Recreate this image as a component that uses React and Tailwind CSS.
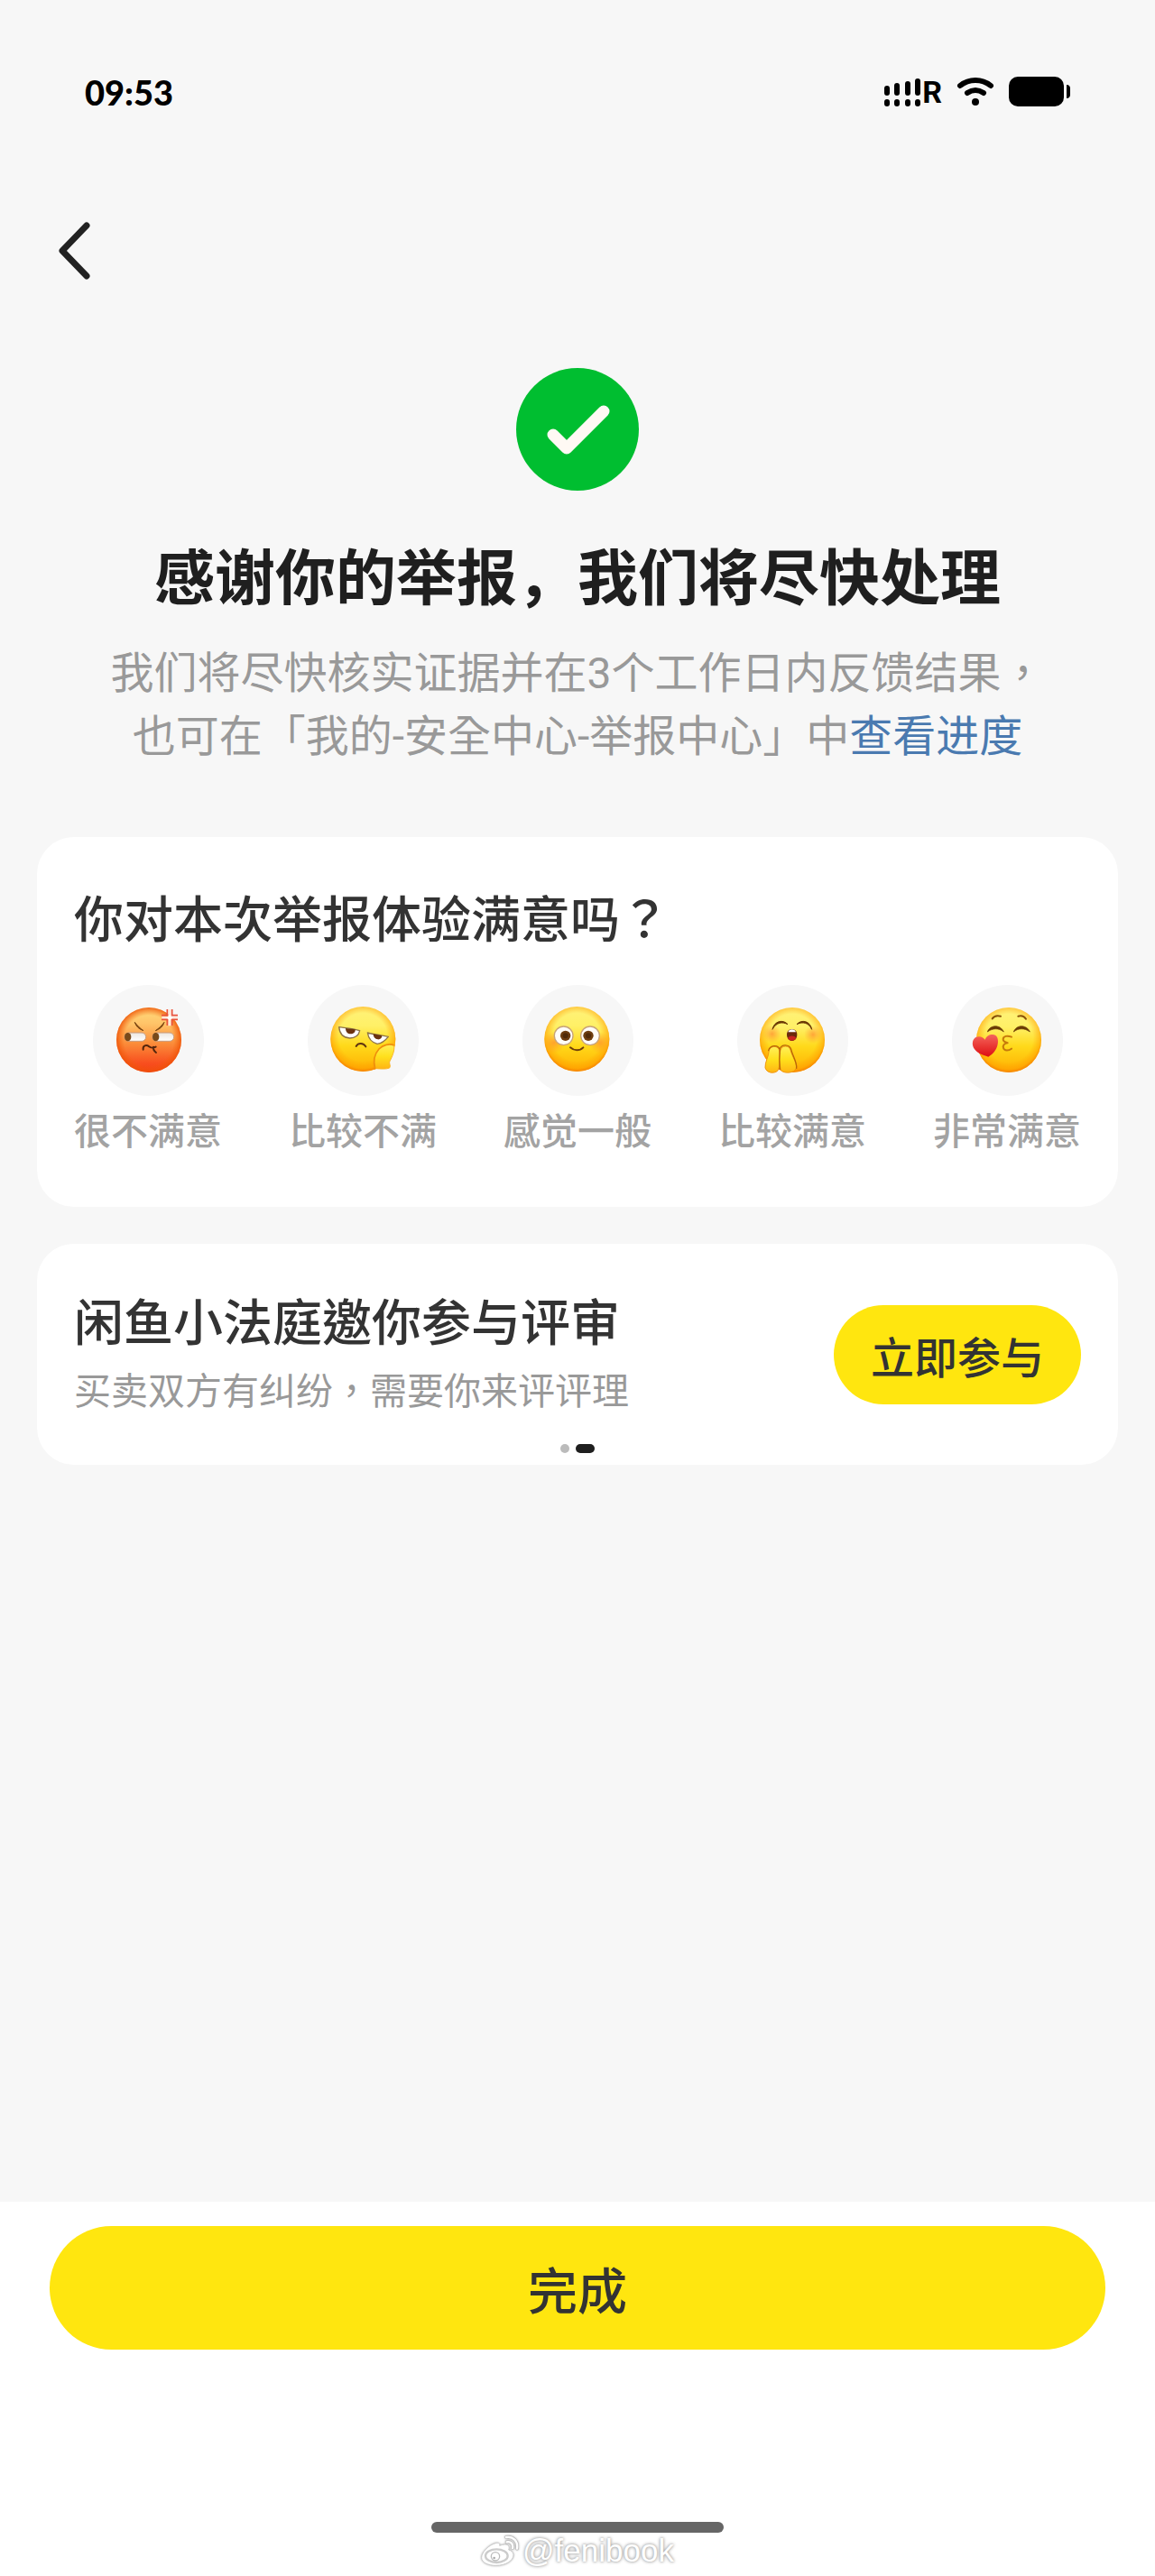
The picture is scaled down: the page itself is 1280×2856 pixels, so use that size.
import React, { useState } from "react";

const ratings = [
  { id: "angry", label: "很不满意", Face: AngryFace },
  { id: "bored", label: "比较不满", Face: BoredFace },
  { id: "neutral", label: "感觉一般", Face: NeutralFace },
  { id: "happy", label: "比较满意", Face: HappyFace },
  { id: "love", label: "非常满意", Face: LoveFace },
];

// Gradients shared by all five faces
function FaceDefs() {
  return (
    <svg className="absolute h-0 w-0" aria-hidden="true">
      <defs>
        <linearGradient id="face-yellow" x1="0" y1="0" x2="0" y2="1">
          <stop offset="0" stopColor="#fff27a" />
          <stop offset="0.3" stopColor="#fff066" />
          <stop offset="0.6" stopColor="#ffd91a" />
          <stop offset="1" stopColor="#ffae00" />
        </linearGradient>
        <radialGradient id="face-rim" cx="0.5" cy="0.47" r="0.53">
          <stop offset="0.7" stopColor="#ff9a00" stopOpacity="0" />
          <stop offset="0.9" stopColor="#ff9a00" stopOpacity="0.5" />
          <stop offset="1" stopColor="#f57c00" stopOpacity="0.95" />
        </radialGradient>
        <linearGradient id="face-red" x1="0" y1="0" x2="0" y2="1">
          <stop offset="0" stopColor="#ffdb7c" />
          <stop offset="0.25" stopColor="#ffc368" />
          <stop offset="0.55" stopColor="#fb8d3a" />
          <stop offset="0.85" stopColor="#f8501f" />
          <stop offset="1" stopColor="#f53a18" />
        </linearGradient>
        <radialGradient id="face-red-rim" cx="0.5" cy="0.5" r="0.5">
          <stop offset="0.76" stopColor="#f4600a" stopOpacity="0" />
          <stop offset="1" stopColor="#ee5208" stopOpacity="0.85" />
        </radialGradient>
        <radialGradient id="face-blush">
          <stop offset="0" stopColor="#ff7a2e" stopOpacity="0.6" />
          <stop offset="1" stopColor="#ff8a2e" stopOpacity="0" />
        </radialGradient>
        <linearGradient id="face-hand" x1="0" y1="0" x2="0" y2="1">
          <stop offset="0" stopColor="#fff05a" />
          <stop offset="0.5" stopColor="#ffe01c" />
          <stop offset="1" stopColor="#ffb413" />
        </linearGradient>
        <linearGradient id="face-heart" x1="0" y1="0" x2="0" y2="1">
          <stop offset="0" stopColor="#f4655c" />
          <stop offset="0.5" stopColor="#ea3a36" />
          <stop offset="1" stopColor="#dc0d14" />
        </linearGradient>
        <linearGradient id="face-eye" x1="0" y1="0" x2="0" y2="1">
          <stop offset="0" stopColor="#ece6e0" />
          <stop offset="1" stopColor="#ffffff" />
        </linearGradient>
      </defs>
    </svg>
  );
}

function FaceFrame({ cx, cy, fill = "url(#face-yellow)", rim = "url(#face-rim)", children }) {
  return (
    <svg viewBox="0 0 369 369" className="h-full w-full" fill="none" aria-hidden="true">
      <circle cx={cx} cy={cy} r="108" fill={fill} />
      <circle cx={cx} cy={cy} r="108" fill={rim} />
      {children}
    </svg>
  );
}

function AngryFace() {
  return (
    <FaceFrame cx={186} cy={183} fill="url(#face-red)" rim="url(#face-red-rim)">
      <path d="M139 124c8 11 17 20 29 28-13-4-25-13-29-28Z" fill="#7a4510" stroke="#7a4510" strokeWidth="3" strokeLinejoin="round" />
      <path d="M237 124c-8 11-17 20-29 28 13-4 25-13 29-28Z" fill="#7a4510" stroke="#7a4510" strokeWidth="3" strokeLinejoin="round" />
      <rect x="105" y="159" width="71" height="28" rx="14" fill="url(#face-eye)" stroke="#c99b7d" strokeWidth="3" />
      <rect x="198" y="159" width="71" height="28" rx="14" fill="url(#face-eye)" stroke="#c99b7d" strokeWidth="3" />
      <ellipse cx="116" cy="173" rx="11" ry="14" fill="#78491a" />
      <ellipse cx="209" cy="173" rx="11" ry="14" fill="#78491a" />
      <path d="M167 215c-2-14 10-17 20-10 8 5 12 6 22 1M201 206c-1 10 3 15 9 19" stroke="#54250c" strokeWidth="6" strokeLinecap="round" />
      <g stroke="#ffe9dc" strokeWidth="10">
        <path d="M255 82v54M229 109h53" />
      </g>
      <path
        d="M247 81v20h-19M263 81v20h19M247 135v-20h-19M263 135v-20h19"
        stroke="#e9523c"
        strokeWidth="5"
        strokeLinejoin="round"
      />
      <path d="m255 98 4 7 7 4-7 4-4 7-4-7-7-4 7-4Z" fill="#fff" />
    </FaceFrame>
  );
}

function BoredFace() {
  return (
    <FaceFrame cx={184} cy={180}>
      <path d="M104 140c20 3 47 5 69 12-4 19-16 25-33 25-21-1-34-15-36-37Z" fill="#fff" stroke="#8d7344" strokeWidth="4" strokeLinejoin="round" />
      <path d="M126 144l32 4c1 10-6 15-15 15-10 0-17-7-17-19Z" fill="#6b3310" />
      <path d="M199 159c20 5 47 9 69 13-10 13-20 22-37 24-18-5-29-17-32-37Z" fill="#fff" stroke="#8d7344" strokeWidth="4" strokeLinejoin="round" />
      <path d="M218 163l29 6c0 9-7 13-14 12-9-1-15-8-15-18Z" fill="#6b3310" />
      <path d="M161 204c7-12 24-12 32 1" stroke="#5f3410" strokeWidth="6" strokeLinecap="round" />
      <path
        d="M224 278c-6-22-3-47 13-65 13-13 35-20 50-12 3 20-7 38-15 55-1 8 5 13 0 20-11 5-31 3-48 2Z"
        fill="url(#face-hand)"
      />
      <path d="M224 278c-6-22-3-47 13-65 13-13 35-20 50-12" stroke="#ef8e0c" strokeWidth="5" strokeLinecap="round" />
      <path d="M287 201c3 20-7 38-15 55-1 8 5 13 0 20-11 5-31 3-45 2" stroke="#fcb526" strokeWidth="3" />
    </FaceFrame>
  );
}

function NeutralFace() {
  return (
    <FaceFrame cx={181} cy={180}>
      <circle cx="105" cy="192" r="36" fill="url(#face-blush)" />
      <circle cx="257" cy="192" r="36" fill="url(#face-blush)" />
      <circle cx="137" cy="169" r="31" fill="#fffdf9" stroke="#c8a379" strokeWidth="4" />
      <circle cx="225" cy="169" r="31" fill="#fffdf9" stroke="#c8a379" strokeWidth="4" />
      <circle cx="143" cy="169" r="17" fill="#6d3d10" />
      <circle cx="219" cy="169" r="17" fill="#6d3d10" />
      <circle cx="143" cy="169" r="9" fill="#4f2a0a" />
      <circle cx="219" cy="169" r="9" fill="#4f2a0a" />
      <path d="M159 208c13 12 31 12 43 0" stroke="#6e3e0a" strokeWidth="6" strokeLinecap="round" />
    </FaceFrame>
  );
}

function HappyFace() {
  return (
    <FaceFrame cx={183} cy={183}>
      <circle cx="116" cy="163" r="30" fill="url(#face-blush)" />
      <circle cx="252" cy="165" r="30" fill="url(#face-blush)" />
      <path d="M117 148c6-28 35-35 51-17-19-10-39-6-51 17ZM198 131c16-18 45-11 50 17-10-23-31-27-50-17Z" fill="#6a3804" stroke="#6a3804" strokeWidth="3" strokeLinejoin="round" />
      <path d="M165 165c0-24 34-24 34 0 0 28-34 28-34 0Z" fill="#6b2a0c" />
      <path d="M169 157c3-12 23-12 26 0Z" fill="#fff" />
      <path d="M168 177c5-10 23-10 28 0-5 11-23 11-28 0Z" fill="#c9251f" />
      <path
        d="M106 218c4-15 26-18 33-3 6 25 4 57-5 71-12 10-37 7-41-11-1-18 11-35 13-57Z"
        fill="url(#face-hand)"
        stroke="#f2960f"
        strokeWidth="3"
      />
      <path
        d="M144 216c5-16 28-16 33 0 6 25 23 43 19 61-6 16-36 19-50 8-7-20-8-48-2-69Z"
        fill="url(#face-hand)"
        stroke="#f2960f"
        strokeWidth="3"
      />
      <path d="M104 218c5-18 31-21 37-4 7-19 32-16 38 0 5 22 21 44 18 63M142 214c-2 24-2 45 0 66" stroke="#b8660a" strokeWidth="4" strokeLinecap="round" />
    </FaceFrame>
  );
}

function LoveFace() {
  return (
    <FaceFrame cx={189} cy={183}>
      <path d="M134 112c6-9 17-11 28-8M220 104c11-3 21 1 26 9" stroke="#8a5208" strokeWidth="6" strokeLinecap="round" />
      <path d="M118 156c8-24 43-26 54 0-16-13-36-13-54 0ZM205 156c10-26 44-24 54 0-18-13-38-13-54 0Z" fill="#6a3a04" stroke="#6a3a04" strokeWidth="2" strokeLinejoin="round" />
      <path d="M198 173c-14-6-28-3-28 8 0 8 8 10 15 12-11 1-17 8-14 17 3 10 18 9 27 2" stroke="#c67a0b" strokeWidth="6" strokeLinecap="round" strokeLinejoin="round" />
      <path
        d="M110 182c4-12 15-18 27-17 15 1 19 19 14 37-4 14-13 27-30 37-21-7-40-14-49-30-7-15-3-31 9-36 12-4 22 0 29 9Z"
        fill="url(#face-heart)"
      />
    </FaceFrame>
  );
}

function StatusBar() {
  return (
    <header className="flex h-[204px] items-center justify-between px-[94px] text-black">
      <time className="font-[Lato,sans-serif] text-[38px] leading-[40px] font-black">09:53</time>
      <div className="flex items-center">
        <svg width="42" height="32" viewBox="0 0 42 32" className="mr-px" aria-label="信号">
          <g stroke="#000" strokeWidth="6" strokeLinecap="round">
            <path d="M4 12v5M15 9v8M27 7v10M38 4v13" />
            <path d="M4 27v2M15 27v2M27 27v2M38 27v2" />
          </g>
        </svg>
        <span className="font-[Roboto,sans-serif] text-[34px] leading-[32px] font-bold">R</span>
        <svg width="42" height="34" viewBox="0 0 42 34" className="mr-4 ml-4" fill="none" aria-label="Wi-Fi">
          <path d="M4 10c10-8 24-8 34 0" stroke="#000" strokeWidth="6" strokeLinecap="round" />
          <path d="M12 18c6-4 12-4 18 0" stroke="#000" strokeWidth="6" strokeLinecap="round" />
          <circle cx="21" cy="28" r="4" fill="#000" />
        </svg>
        <svg width="68" height="34" viewBox="0 0 68 34" aria-label="电量">
          <rect x="0" y="0" width="61" height="33" rx="10" fill="#000" />
          <path d="M64 9c3 0 4 2 4 4v7c0 2-1 4-4 4Z" fill="#000" />
        </svg>
      </div>
    </header>
  );
}

function ResultHeader() {
  return (
    <section className="flex flex-col items-center pt-14 text-center">
      <svg width="137" height="137" viewBox="0 0 137 137" fill="none" aria-hidden="true">
        <circle cx="68" cy="68" r="68" fill="#00be30" />
        <path d="m41 74 15 15 41-41" stroke="#fff9f4" strokeWidth="13" strokeLinecap="round" strokeLinejoin="round" />
      </svg>
      <h1 className="mt-11 font-['Noto_Sans_CJK_SC',sans-serif] text-[67px] leading-[94px] font-bold text-[#1f1f1f]">
        感谢你的举报，我们将尽快处理
      </h1>
      <p className="mt-[29px] font-[Roboto,'Noto_Sans_CJK_TC',sans-serif] text-[48px] leading-[70px] text-[#999]">
        我们将尽快核实证据并在3个工作日内反馈结果，
        <br />
        也可在「我的-安全中心-举报中心」中
        <a href="#progress" className="text-[#4a7ab0]">
          查看进度
        </a>
      </p>
    </section>
  );
}

function RatingCard() {
  const [selected, setSelected] = useState(null);

  return (
    <section className="rounded-[41px] bg-white px-[41px] pt-[52px] pb-[59px]">
      <h2 className="text-[55px] leading-[70px] font-medium text-[#333]">你对本次举报体验满意吗？</h2>
      <div className="mt-[42px] flex justify-between">
        {ratings.map(({ id, label, Face }) => (
          <button
            key={id}
            type="button"
            aria-pressed={selected === id}
            onClick={() => setSelected(id)}
            className="flex flex-col items-center"
          >
            <span className="h-[123px] w-[123px] rounded-full bg-[#f7f7f7]">
              <Face />
            </span>
            <span className="mt-2 text-[41px] leading-[56px] font-medium text-[#a3a3a3]">{label}</span>
          </button>
        ))}
      </div>
    </section>
  );
}

function CourtCard() {
  return (
    <section className="rounded-[41px] bg-white px-[41px] pt-12 pb-[13px]">
      <div className="flex items-center justify-between">
        <div className="pb-[10px]">
          <h2 className="text-[55px] leading-[70px] font-medium text-[#333]">闲鱼小法庭邀你参与评审</h2>
          <p className="mt-[14px] text-[41px] leading-[56px] text-[#999]">买卖双方有纠纷，需要你来评评理</p>
        </div>
        <button type="button" className="h-[110px] rounded-full bg-[#ffe60f] px-[41px] text-[48px] font-medium text-[#333]">
          立即参与
        </button>
      </div>
      <div className="mt-6 flex justify-center gap-[7px]">
        <span className="h-[10px] w-[10px] rounded-full bg-[#bbb]" />
        <span className="h-[10px] w-[21px] rounded-full bg-[#1f1f1f]" />
      </div>
    </section>
  );
}

function Watermark() {
  return (
    <div className="flex items-center gap-1 text-white">
      <svg width="42" height="34" viewBox="0 0 126 102" className="drop-shadow-[0_0_1px_#aaa]" aria-hidden="true">
        <path
          d="M48 26c-22 6-46 30-46 48 0 16 22 26 48 26 34 0 58-17 58-35 0-10-8-15-16-17 4-10 0-18-12-18-6 0-12 2-18 4 2-6-2-11-14-8Z"
          fill="#fff"
          stroke="#ccc"
          strokeWidth="3"
        />
        <ellipse cx="52" cy="68" rx="37" ry="22" fill="#fff" stroke="#ccc" strokeWidth="7" />
        <circle cx="48" cy="70" r="14" fill="#fff" stroke="#bbb" strokeWidth="4" />
        <circle cx="44" cy="75" r="4" fill="#aaa" />
        <path d="M84 6c24-4 40 14 36 38M86 22c13-3 22 7 19 20" fill="none" stroke="#bbb" strokeWidth="11" strokeLinecap="round" />
        <path d="M84 6c24-4 40 14 36 38M86 22c13-3 22 7 19 20" fill="none" stroke="#fff" strokeWidth="7" strokeLinecap="round" />
      </svg>
      <span className="font-['Liberation_Sans',sans-serif] text-[35px] leading-[40px] [text-shadow:0_0_3px_#999,0_0_4px_#bbb]">
        @fenibook
      </span>
    </div>
  );
}

export default function App() {
  return (
    <div className="flex min-h-screen flex-col bg-[#f7f7f7] font-['Noto_Sans_CJK_TC',sans-serif]">
      <FaceDefs />
      <StatusBar />
      <nav className="flex h-[148px] items-center px-[64px]">
        <button type="button" aria-label="返回">
          <svg width="38" height="64" viewBox="0 0 38 64" fill="none">
            <path d="M32 4 5 32l27 28" stroke="#222" strokeWidth="7" strokeLinecap="round" strokeLinejoin="round" />
          </svg>
        </button>
      </nav>

      <main className="flex-1">
        <ResultHeader />
        <div className="mt-[76px] flex flex-col gap-[41px] px-[41px]">
          <RatingCard />
          <CourtCard />
        </div>
      </main>

      <footer className="flex flex-col items-center bg-white px-[55px] pt-[27px] pb-2">
        <button type="button" className="h-[137px] w-full rounded-full bg-[#ffe60f] text-[55px] font-medium text-[#333]">
          完成
        </button>
        <span className="mt-[191px] h-3 w-[324px] rounded-full bg-[#666]" />
        <Watermark />
      </footer>
    </div>
  );
}
